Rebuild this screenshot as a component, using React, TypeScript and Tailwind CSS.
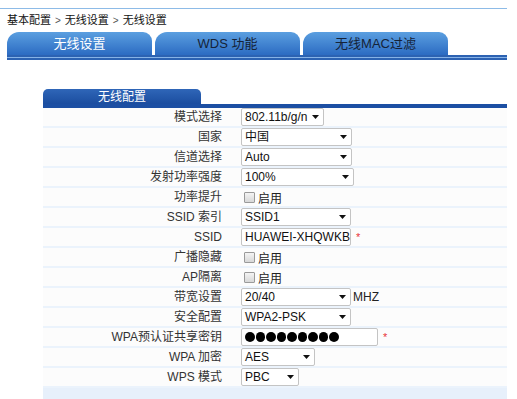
const FONT = { fontFamily: '"Liberation Sans", "Noto Sans CJK SC", Arial, sans-serif' };

function Arrow() {
  return (
    <svg width="7" height="4" viewBox="0 0 7 4" className="shrink-0">
      <path d="M0 0h7L3.5 4z" fill="#111" />
    </svg>
  );
}

function Select({ value, width }: { value: string; width: string }) {
  return (
    <div
      className={`${width} h-[18px] flex items-center justify-between pl-[3px] pr-[4px] bg-white border border-[#c4c4c4] rounded-[2px] text-[12px] text-[#111]`}
    >
      <span>{value}</span>
      <Arrow />
    </div>
  );
}

function Check() {
  return (
    <div className="flex items-center">
      <span className="w-[11px] h-[11px] ml-[3px] border border-[#9a9a9a] bg-gradient-to-b from-[#f4f4f4] to-[#d8d8d8] rounded-[1px]" />
      <span className="ml-[3px] text-[12px] text-[#222] mt-[3px]">启用</span>
    </div>
  );
}

function Star() {
  return <span className="text-[#e8333a] text-[11px] ml-[5px]">*</span>;
}

const rows: { label: string; field: React.ReactNode }[] = [
  { label: "模式选择", field: <Select value="802.11b/g/n" width="w-[83px]" /> },
  { label: "国家", field: <Select value="中国" width="w-[111px]" /> },
  { label: "信道选择", field: <Select value="Auto" width="w-[111px]" /> },
  { label: "发射功率强度", field: <Select value="100%" width="w-[113px]" /> },
  { label: "功率提升", field: <Check /> },
  { label: "SSID 索引", field: <Select value="SSID1" width="w-[110px]" /> },
  {
    label: "SSID",
    field: (
      <div className="flex items-center">
        <div className="w-[110px] h-[18px] flex items-center pl-[3px] bg-white border border-[#c4c4c4] rounded-[2px] text-[12px] text-[#111]">
          HUAWEI-XHQWKB
        </div>
        <Star />
      </div>
    ),
  },
  { label: "广播隐藏", field: <Check /> },
  { label: "AP隔离", field: <Check /> },
  {
    label: "带宽设置",
    field: (
      <div className="flex items-center">
        <Select value="20/40" width="w-[110px]" />
        <span className="ml-[2px] text-[12px] text-[#222]">MHZ</span>
      </div>
    ),
  },
  { label: "安全配置", field: <Select value="WPA2-PSK" width="w-[110px]" /> },
  {
    label: "WPA预认证共享密钥",
    field: (
      <div className="flex items-center">
        <div className="w-[137px] h-[18px] flex items-center gap-[1px] pl-[3px] bg-white border border-[#c4c4c4] rounded-[2px]">
          {Array.from({ length: 9 }).map((_, i) => (
            <span key={i} className="w-[9.5px] h-[9.5px] rounded-full bg-black" />
          ))}
        </div>
        <Star />
      </div>
    ),
  },
  { label: "WPA 加密", field: <Select value="AES" width="w-[74px]" /> },
  { label: "WPS 模式", field: <Select value="PBC" width="w-[58px]" /> },
];

const tabs = [
  { name: "无线设置", active: true },
  { name: "WDS 功能", active: false },
  { name: "无线MAC过滤", active: false },
];

export default function App() {
  return (
    <div className="w-[517px] h-[399px] bg-white overflow-hidden" style={FONT}>
      <div className="pt-[8px]">
        <div className="w-[507px] h-[1px] bg-[#8dbbe7]" />
      </div>

      <div className="h-[23px] pl-[7px] flex items-center text-[11px] text-[#111]">
        基本配置
        <span className="mx-[4px] text-[#555] text-[10px]">&gt;</span>
        无线设置
        <span className="mx-[4px] text-[#555] text-[10px]">&gt;</span>
        无线设置
      </div>

      <div className="pl-[7px] flex gap-[3px] h-[23px]">
        {tabs.map((t) => (
          <div
            key={t.name}
            className={`w-[145px] h-full rounded-tl-[12px] rounded-tr-[9px] bg-gradient-to-b from-[#5b9fe0] to-[#2c6bc2] flex items-center justify-center text-[13px] ${
              t.active ? "text-white" : "text-[#152338]"
            }`}
          >
            {t.name}
          </div>
        ))}
      </div>
      <div className="ml-[7px] w-[500px] h-[5px] border-y-2 border-[#2c62b2] bg-[#86b2e6]" />

      <div className="ml-[43px] w-[464px] mt-[29px]">
        <div className="w-[158px] h-[15px] rounded-t-[5px] bg-gradient-to-b from-[#2f66b8] to-[#1b4d9f] text-white text-[12px] flex items-center justify-center">
          无线配置
        </div>
        <div className="h-[4px] bg-[#1c4fa3]" />
        {rows.map((r) => (
          <div
            key={r.label}
            className="h-[20px] flex items-center bg-[#fcfcfc] border-b-2 border-[#ebf3fc]"
          >
            <div className="w-[179px] text-right text-[12px] text-[#333] whitespace-nowrap">
              {r.label}
            </div>
            <div className="ml-[19px]">{r.field}</div>
          </div>
        ))}
        <div className="h-[12px] bg-[#e7f0fb]" />
      </div>
    </div>
  );
}
